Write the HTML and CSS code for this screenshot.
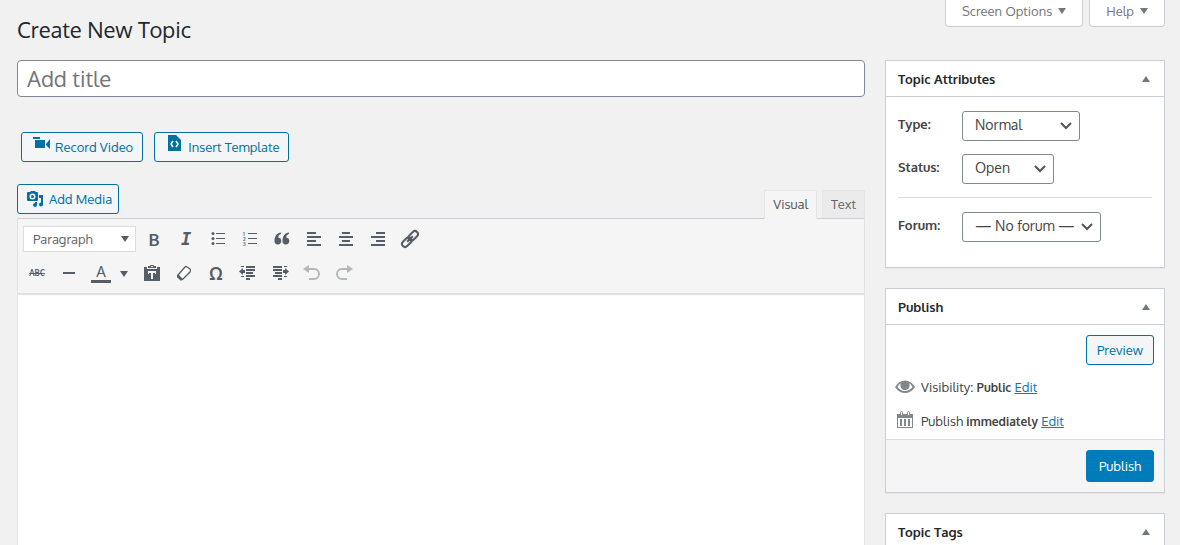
FILE: index.html
```html
<!DOCTYPE html>
<html lang="en">
<head>
  <meta charset="UTF-8">
  <meta name="viewport" content="width=device-width, initial-scale=1.0">
  <title>Create New Topic</title>
  <link rel="stylesheet" href="styles.css">
</head>
<body>
  <div class="wrap">
    <main class="main">
      <h1>Create New Topic</h1>

      <input type="text" class="title-input" placeholder="Add title" aria-label="Add title">

      <div class="extra-buttons">
        <button type="button" class="button">
          <svg class="raised" width="18" height="20" viewBox="0 0 18 20" fill="currentColor"><path d="M1 4h7v2H1zM3 7h10v8H3zM14 11l4-5v10l-4-4z"/></svg>
          Record Video
        </button>
        <button type="button" class="button">
          <svg class="raised" width="18" height="20" viewBox="0 0 18 20"><path fill="currentColor" d="M3 2h8l5 5v11H3z"/><path d="M8 8l-2 3 2 3M11 8l2 3-2 3" fill="none" stroke="#fff" stroke-width="1.500"/></svg>
          Insert Template
        </button>
      </div>

      <div class="editor-tools">
        <button type="button" class="button media">
          <svg width="18" height="18" viewBox="0 0 18 18" fill="currentColor"><path fill-rule="evenodd" d="M2 2h2l1-1h4l1 1h1q1 0 1 1v7q0 1-1 1H2q-1 0-1-1V3q0-1 1-1zm4.500 1.500a3 3 0 1 0 0 6 3 3 0 0 0 0-6z"/><circle cx="6.500" cy="6.500" r="1.500"/><path d="M13 5h4v9.500a2 2 0 1 1-2-2V8h-2zM9 12h2v3a2 2 0 1 1-2-2z"/></svg>
          Add Media
        </button>
        <div class="tabs">
          <button type="button" class="tab active">Visual</button>
          <button type="button" class="tab">Text</button>
        </div>
      </div>

      <div class="editor">
        <div class="toolbar">
          <div class="tool-row">
            <select class="format" aria-label="Format">
              <option>Paragraph</option>
            </select>
            <button type="button" class="tool bold" aria-label="Bold">B</button>
            <button type="button" class="tool italic" aria-label="Italic">I</button>
            <button type="button" class="tool" aria-label="Bulleted list">
              <svg viewBox="0 0 20 20" fill="currentColor"><circle cx="5" cy="4.500" r="1.500"/><circle cx="5" cy="9.500" r="1.500"/><circle cx="5" cy="14.500" r="1.500"/><path d="M8 4h9v1H8zM8 9h9v1H8zM8 14h9v1H8z"/></svg>
            </button>
            <button type="button" class="tool" aria-label="Numbered list">
              <svg viewBox="0 0 20 20" fill="currentColor"><text x="3" y="7" class="digit">1</text><text x="3" y="12" class="digit">2</text><text x="3" y="17" class="digit">3</text><path d="M8 4h9v1H8zM8 9h9v1H8zM8 14h9v1H8z"/></svg>
            </button>
            <button type="button" class="tool" aria-label="Blockquote">
              <svg viewBox="0 0 20 20" fill="currentColor"><path d="M9 3.500C5 4 2.500 7 2.500 12a3.400 3.400 0 1 0 3.800-3.300C6.300 7 7.200 5.500 9 4.800zM17 3.500c-4 .5-6.500 3.500-6.500 8.500a3.400 3.400 0 1 0 3.800-3.300C14.300 7 15.200 5.500 17 4.800z"/></svg>
            </button>
            <button type="button" class="tool" aria-label="Align left">
              <svg viewBox="0 0 20 20" fill="currentColor"><path d="M3 3h9v2H3zM3 7h14v2H3zM3 11h9v2H3zM3 15h14v2H3z"/></svg>
            </button>
            <button type="button" class="tool" aria-label="Align center">
              <svg viewBox="0 0 20 20" fill="currentColor"><path d="M6 3h8v2H6zM3 7h14v2H3zM6 11h8v2H6zM3 15h14v2H3z"/></svg>
            </button>
            <button type="button" class="tool" aria-label="Align right">
              <svg viewBox="0 0 20 20" fill="currentColor"><path d="M8 3h9v2H8zM3 7h14v2H3zM8 11h9v2H8zM3 15h14v2H3z"/></svg>
            </button>
            <button type="button" class="tool" aria-label="Insert link">
              <svg viewBox="0 0 20 20" fill="none" stroke="currentColor" stroke-width="2"><g transform="rotate(-45 10 10)"><rect x="0" y="7" width="11" height="6" rx="3"/><rect x="9" y="7" width="11" height="6" rx="3"/><path d="M6 10h8"/></g></svg>
            </button>
          </div>
          <div class="tool-row">
            <button type="button" class="tool strike" aria-label="Strikethrough">ABC</button>
            <button type="button" class="tool" aria-label="Horizontal line">
              <svg viewBox="0 0 20 20" fill="currentColor"><path d="M4 9h12v2H4z"/></svg>
            </button>
            <button type="button" class="tool color" aria-label="Text color"><span>A</span></button>
            <button type="button" class="tool caret" aria-label="More colors">
              <svg viewBox="0 0 20 20" fill="currentColor"><path d="M3 8h8l-4 6z"/></svg>
            </button>
            <button type="button" class="tool" aria-label="Paste as text">
              <svg viewBox="0 0 20 20" fill="currentColor"><path fill-rule="evenodd" d="M6 5V3h2q0-1 1-1h2q1 0 1 1h2v2zm3-2v1h2V3z"/><path fill-rule="evenodd" d="M2 4h3v2h10V4h3v14H2zM6 8v3h1v-1h2v6h2v-6h2v1h1V8z"/></svg>
            </button>
            <button type="button" class="tool" aria-label="Clear formatting">
              <svg viewBox="0 0 20 20"><path d="M4 12l7-8q1-1 2 0l3 2q1 1 0 3l-7 7q-1 1-2 0l-3-2q-1-1 0-2z" fill="#fff" stroke="currentColor" stroke-width="1.300"/><path d="M4 11l5 5-1 1q-1 1-2 0l-2-2q-2-1 0-4z" fill="currentColor"/></svg>
            </button>
            <button type="button" class="tool omega" aria-label="Special character">Ω</button>
            <button type="button" class="tool" aria-label="Decrease indent">
              <svg viewBox="0 0 20 20" fill="currentColor"><path d="M3 3h3v1H3zM8 3h9v2H8zM8 6h9v2H8zM8 9h7v2H8zM8 12h9v2H8zM3 13h3v1H3zM8 15h4v2H8zM1 8.500L5 5v2h2v3H5v2z"/></svg>
            </button>
            <button type="button" class="tool" aria-label="Increase indent">
              <svg viewBox="0 0 20 20" fill="currentColor"><path d="M3 3h9v2H3zM14 3h3v1h-3zM3 6h9v2H3zM5 9h7v2H5zM3 12h9v2H3zM14 13h3v1h-3zM8 15h4v2H8zM19 8.500L15 5v2h-2v3h2v2z"/></svg>
            </button>
            <button type="button" class="tool" aria-label="Undo" disabled>
              <svg viewBox="0 0 20 20" fill="currentColor"><path d="M1 6l6-4v8z"/><path d="M6 6h6a4.500 4.500 0 0 1 0 10H7" fill="none" stroke="currentColor" stroke-width="2"/></svg>
            </button>
            <button type="button" class="tool" aria-label="Redo" disabled>
              <svg viewBox="0 0 20 20" fill="currentColor"><path d="M19 6l-6-4v8z"/><path d="M14 6H8a4.500 4.500 0 0 0 0 10h5" fill="none" stroke="currentColor" stroke-width="2"/></svg>
            </button>
          </div>
        </div>
        <textarea class="content" rows="20" aria-label="Topic content"></textarea>
      </div>
    </main>

    <aside class="side">
      <div class="screen-meta">
        <button type="button" class="meta-link">Screen Options <i class="down"></i></button>
        <button type="button" class="meta-link">Help <i class="down"></i></button>
      </div>

      <section class="postbox">
        <header class="box-head">
          <h2>Topic Attributes</h2>
          <button type="button" class="toggle" aria-label="Toggle Topic Attributes"></button>
        </header>
        <div class="attributes">
          <div class="field">
            <label for="type">Type:</label>
            <select id="type" class="select type"><option>Normal</option></select>
          </div>
          <div class="field">
            <label for="status">Status:</label>
            <select id="status" class="select status"><option>Open</option></select>
          </div>
          <hr>
          <div class="field">
            <label for="forum">Forum:</label>
            <select id="forum" class="select forum"><option>— No forum —</option></select>
          </div>
        </div>
      </section>

      <section class="postbox">
        <header class="box-head">
          <h2>Publish</h2>
          <button type="button" class="toggle" aria-label="Toggle Publish"></button>
        </header>
        <div class="preview">
          <button type="button" class="button">Preview</button>
        </div>
        <div class="misc-list">
          <div class="misc">
            <svg width="20" height="20" viewBox="0 0 20 20"><path fill="#82878c" fill-rule="evenodd" d="M0 10q4-6.500 10-6.500T20 10q-4 6-10 6T0 10zm2.500 0q3 4 7.500 4t7.500-4Q16 7 14 6.200a4.600 4.600 0 1 1-8 0Q4 7 2.500 10z"/><circle cx="10" cy="8.500" r="3.800" fill="#82878c"/></svg>
            <p>Visibility: <b>Public</b> <a href="#">Edit</a></p>
          </div>
          <div class="misc">
            <svg width="20" height="20" viewBox="0 0 20 20" fill="#82878c"><path fill-rule="evenodd" d="M2 3h16v14H2zm1 4v9h14V7z"/><path d="M5 8h2v7H5zM9 8h2v7H9zM13 8h2v7h-2z"/><g fill="#fff" stroke="#82878c"><rect x="5.500" y=".5" width="2" height="4" rx="1"/><rect x="12.500" y=".5" width="2" height="4" rx="1"/></g></svg>
            <p>Publish <b>immediately</b> <a href="#">Edit</a></p>
          </div>
        </div>
        <footer class="publish">
          <button type="submit" class="button primary">Publish</button>
        </footer>
      </section>

      <section class="postbox">
        <header class="box-head">
          <h2>Topic Tags</h2>
          <button type="button" class="toggle" aria-label="Toggle Topic Tags"></button>
        </header>
      </section>
    </aside>
  </div>
</body>
</html>
```
FILE: styles.css
```css
:root {
  --blue: #0071a1;
  --primary: #007cba;
  --text: #444;
  --heading: #23282d;
  --icon: #555d66;
  --border: #ccd0d4;
  --field-border: #7e8993;
}

* {
  margin: 0;
  padding: 0;
  box-sizing: border-box;
}

body {
  height: 100vh;
  overflow: hidden;
  background: #f1f1f1;
  color: var(--text);
  font-family: Oxygen, "Noto Sans", sans-serif;
  font-size: 13px;
  line-height: 18px;
}

button,
input,
select,
textarea {
  font-family: inherit;
  font-size: 13px;
}

.wrap {
  display: flex;
  gap: 20px;
  padding: 0 15px 0 17px;
}

.main {
  display: flex;
  flex-direction: column;
  flex: 1;
  min-width: 0;
}

h1 {
  margin: 14px 0 16px;
  color: var(--heading);
  font-size: 22px;
  font-weight: 400;
  line-height: 30px;
}

.title-input {
  width: 100%;
  height: 37px;
  padding: 0 9px 2px;
  border: 1px solid var(--field-border);
  border-radius: 4px;
  background: #fff;
  font-size: 22px;
}

.title-input::placeholder {
  color: #757575;
}

.button {
  display: inline-flex;
  align-items: center;
  justify-content: center;
  gap: 5px;
  height: 30px;
  padding: 0 10px;
  border: 1px solid var(--blue);
  border-radius: 3px;
  background: #f3f5f6;
  color: var(--blue);
  white-space: nowrap;
}

.button.primary {
  height: 32px;
  padding: 0 12px;
  border-color: var(--primary);
  background: var(--primary);
  color: #fff;
}

.extra-buttons {
  display: flex;
  gap: 11px;
  margin: 35px 0 22px 4px;
}

.extra-buttons .button {
  padding-right: 9px;
}

.raised {
  align-self: flex-start;
}

.editor-tools {
  display: flex;
  justify-content: space-between;
  height: 34px;
}

.media {
  padding: 0 6px 0 8px;
}

.tabs {
  display: flex;
  align-items: flex-end;
  gap: 5px;
}

.tab {
  height: 28px;
  padding: 0 8px 2px;
  border: 1px solid #e5e5e5;
  border-bottom: 0;
  background: #ebebeb;
  color: #666;
}

.tab.active {
  position: relative;
  height: 29px;
  margin-bottom: -1px;
  background: #f5f5f5;
  color: #555;
}

.editor {
  border: 1px solid #e5e5e5;
  border-top-color: var(--border);
  background: #fff;
}

.toolbar {
  padding: 3px;
  border-bottom: 1px solid #ddd;
  background: #f5f5f5;
  box-shadow: 0 1px 1px rgba(0, 0, 0, 0.1);
}

.tool-row {
  display: flex;
  align-items: center;
  height: 34px;
}

.format {
  appearance: none;
  width: 113px;
  height: 26px;
  margin: 0 2px;
  padding: 0 9px;
  border: 1px solid #ddd;
  background: #fff url("data:image/svg+xml,%3Csvg xmlns='http://www.w3.org/2000/svg' width='8' height='6'%3E%3Cpath d='M0 0h8L4 6z' fill='%23555d66'/%3E%3C/svg%3E") no-repeat right 6px center;
  color: #666;
}

.tool {
  display: flex;
  align-items: center;
  justify-content: center;
  width: 32px;
  height: 28px;
  border: 0;
  background: none;
  color: var(--icon);
}

.tool svg {
  width: 20px;
  height: 20px;
}

.tool:disabled {
  color: #b4b8bc;
}

.bold {
  font-size: 17px;
  font-weight: 800;
}

.italic {
  font-family: "DejaVu Sans Mono", monospace;
  font-size: 17px;
  font-style: italic;
  font-weight: 700;
}

.digit {
  font-size: 5px;
  font-weight: 700;
}

.strike {
  font-size: 8px;
  font-weight: 600;
  text-decoration: line-through;
}

.color span {
  width: 20px;
  border-bottom: 3px solid var(--icon);
  font-size: 15px;
  line-height: 17px;
}

.caret {
  width: 19px;
  justify-content: flex-start;
}

.caret svg {
  flex: none;
}

.omega {
  font-size: 18px;
  font-weight: 600;
}

.content {
  display: block;
  width: 100%;
  border: 0;
  padding: 10px;
  resize: none;
  background: none;
}

.side {
  flex: 0 0 280px;
}

.screen-meta {
  display: flex;
  justify-content: flex-end;
  gap: 6px;
  margin-bottom: 33px;
}

.meta-link {
  display: flex;
  align-items: center;
  gap: 6px;
  height: 27px;
  padding: 0 16px 4px;
  border: 1px solid var(--border);
  border-top: 0;
  border-radius: 0 0 4px 4px;
  background: #fff;
  color: #72777c;
  white-space: nowrap;
}

.down {
  border: 4px solid transparent;
  border-top: 6px solid #72777c;
  border-bottom: 0;
}

.postbox {
  margin-bottom: 20px;
  border: 1px solid var(--border);
  background: #fff;
  box-shadow: 0 1px 1px rgba(0, 0, 0, 0.04);
}

.box-head {
  display: flex;
  align-items: center;
  justify-content: space-between;
  height: 36px;
  padding: 0 14px 0 12px;
  border-bottom: 1px solid var(--border);
}

h2 {
  color: var(--heading);
  font-size: 13px;
  font-weight: 600;
}

.toggle {
  border: 4px solid transparent;
  border-top: 0;
  border-bottom: 6px solid #72777c;
  background: none;
}

.attributes {
  padding: 14px 12px 25px;
}

.field {
  display: flex;
  height: 30px;
  margin-bottom: 13px;
}

.field:last-child {
  margin-bottom: 0;
}

.field label {
  width: 64px;
  padding-top: 4px;
  font-weight: 600;
}

.attributes hr {
  margin-bottom: 14px;
  border: 0;
  border-top: 1px solid #ddd;
}

.select {
  appearance: none;
  padding: 0 12px 4px;
  border: 1px solid var(--field-border);
  border-radius: 3px;
  background: #fff url("data:image/svg+xml,%3Csvg xmlns='http://www.w3.org/2000/svg' width='12' height='8'%3E%3Cpath d='M1 1l5 5 5-5' fill='none' stroke='%23555' stroke-width='2'/%3E%3C/svg%3E") no-repeat right 7px center;
  color: var(--text);
  font-size: 14px;
}

.type {
  width: 118px;
}

.status {
  width: 92px;
}

.forum {
  width: 139px;
}

.preview {
  display: flex;
  justify-content: flex-end;
  padding: 10px;
}

.misc-list {
  display: flex;
  flex-direction: column;
  gap: 10px;
  padding: 0 9px 6px;
}

.misc {
  display: flex;
  align-items: center;
  gap: 6px;
  height: 24px;
}

.misc b {
  font-size: 12px;
  font-weight: 600;
}

a {
  color: var(--primary);
}

.publish {
  display: flex;
  justify-content: flex-end;
  padding: 10px;
  border-top: 1px solid #ddd;
  background: #f5f5f5;
}
```
